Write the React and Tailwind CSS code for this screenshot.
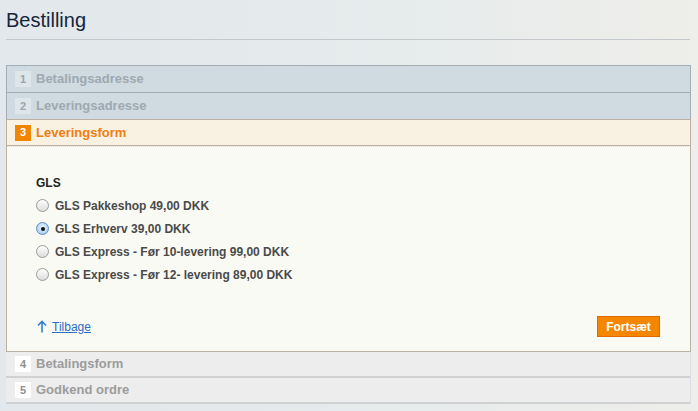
import React, { useState } from 'react';

const steps = [
  { n: 1, label: 'Betalingsadresse', state: 'done' },
  { n: 2, label: 'Leveringsadresse', state: 'done' },
  { n: 3, label: 'Leveringsform', state: 'active' },
  { n: 4, label: 'Betalingsform', state: 'todo' },
  { n: 5, label: 'Godkend ordre', state: 'todo' },
];

const options = [
  'GLS Pakkeshop 49,00 DKK',
  'GLS Erhverv 39,00 DKK',
  'GLS Express - Før 10-levering 99,00 DKK',
  'GLS Express - Før 12- levering 89,00 DKK',
];

const StepHeader = ({ step }) => {
  if (step.state === 'done') {
    return (
      <div className="flex h-[27px] items-center border-x border-t border-[#a3adb4] bg-[#cfdae1] pl-[8px]">
        <span className="flex h-[16px] w-[16px] items-center justify-center bg-[#dfe6ea] text-[11px] font-bold text-[#9aa5ad]">
          {step.n}
        </span>
        <span className="ml-[5px] text-[13px] font-bold text-[#9ea9b1]">{step.label}</span>
      </div>
    );
  }
  if (step.state === 'active') {
    return (
      <div className="flex h-[27px] items-center border-x border-y border-[#bcb0a2] bg-[#f9f2e2] pl-[8px]">
        <span className="flex h-[16px] w-[16px] items-center justify-center bg-[#f28500] text-[11px] font-bold text-white">
          {step.n}
        </span>
        <span className="ml-[5px] text-[13px] font-bold text-[#f07d12]">{step.label}</span>
      </div>
    );
  }
  return (
    <div className="flex h-[26px] items-center border-r border-b-2 border-r-[#dde0e2] border-b-[#cfd1d2] bg-[#ededed] pl-[9px]">
      <span className="flex h-[16px] w-[16px] items-center justify-center bg-white text-[11px] font-bold text-[#8e8e8e]">
        {step.n}
      </span>
      <span className="ml-[5px] text-[13px] font-bold text-[#9c9c9c]">{step.label}</span>
    </div>
  );
};

const Radio = ({ checked }) => (
  <span
    className={
      checked
        ? 'flex h-[13px] w-[13px] items-center justify-center rounded-full border border-[#5f8fc0] bg-[radial-gradient(circle_at_50%_40%,#e8f3ff,#9cc6ee)]'
        : 'flex h-[13px] w-[13px] items-center justify-center rounded-full border border-[#9a9a9a] bg-[linear-gradient(#ffffff,#dcdcdc)]'
    }
  >
    {checked && <span className="h-[4px] w-[4px] rounded-full bg-[#111]" />}
  </span>
);

export default function App() {
  const [selected, setSelected] = useState(1);

  return (
    <div className="h-[411px] w-full overflow-hidden bg-[linear-gradient(90deg,#e2e8eb_0%,#e6ebec_55%,#eeeeea_100%)] px-[6px] pt-[8px] font-['Liberation_Sans',Arial,sans-serif]">
      <div className="mr-[2px] border-b border-[#c3c8cc] pb-[7px]">
        <h1 className="text-[20px] leading-[24px] text-[#15253a]">Bestilling</h1>
      </div>

      <div className="mt-[25px] w-[685px]">
        <StepHeader step={steps[0]} />
        <StepHeader step={steps[1]} />
        <StepHeader step={steps[2]} />

        <div className="border-x border-b border-[#bcb0a2] bg-[#fafaf5]">
          <div className="border-t border-dotted border-[#e4e1d8] pl-[29px] pr-[30px] pt-[28px] pb-[14px]">
            <div className="mb-[3px] text-[12px] font-bold leading-[16px] text-[#222]">GLS</div>
            {options.map((o, i) => (
              <label
                key={o}
                className="flex h-[23px] cursor-pointer items-center gap-[6px]"
                onClick={() => setSelected(i)}
              >
                <Radio checked={selected === i} />
                <span className="text-[12px] font-bold text-[#4a4a4a]">{o}</span>
              </label>
            ))}

            <div className="mt-[30px] flex items-center justify-between">
              <a href="#" className="flex items-center gap-[5px] pl-[1px] text-[12px] text-[#2a6fc4] underline">
                <svg width="10" height="13" viewBox="0 0 10 13" fill="none">
                  <path d="M5 12.5V1.5M1 5.5L5 1.5L9 5.5" stroke="#2f80d0" strokeWidth="1.6" />
                </svg>
                Tilbage
              </a>
              <button className="h-[21px] w-[63px] border border-[#e06a00] bg-[#f58700] text-[12px] font-bold text-white">
                Fortsæt
              </button>
            </div>
          </div>
        </div>

        <StepHeader step={steps[3]} />
        <StepHeader step={steps[4]} />
      </div>
    </div>
  );
}
